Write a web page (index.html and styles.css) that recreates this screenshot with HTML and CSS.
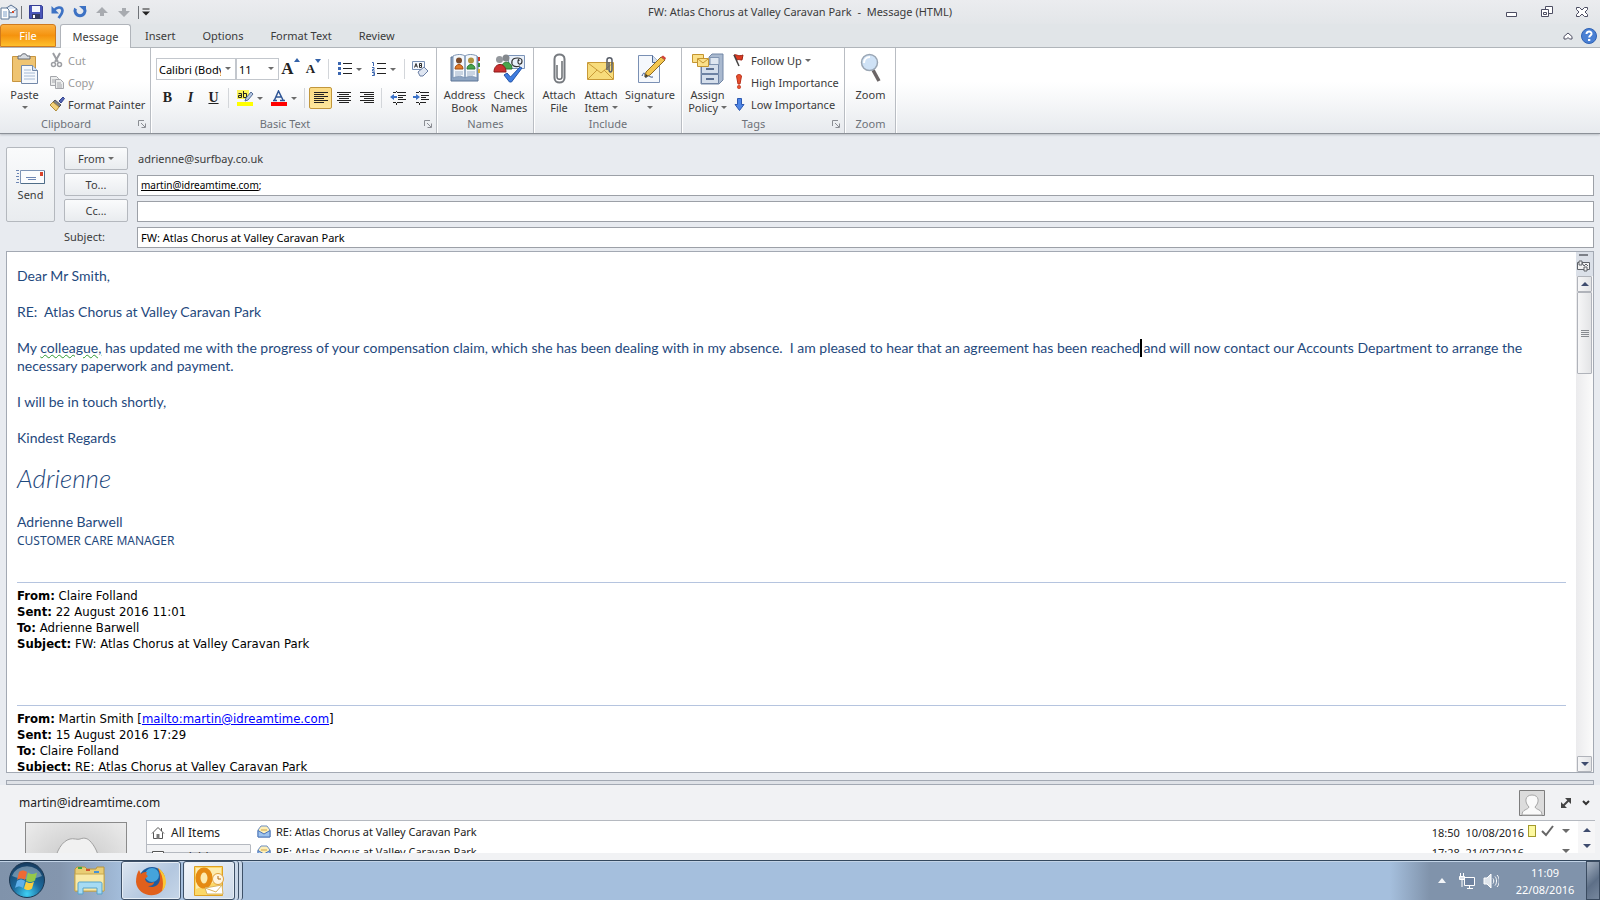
FILE: index.html
```html
<!DOCTYPE html>
<html lang="en">
<head>
    <meta charset="UTF-8">
    <meta name="viewport" content="width=device-width, initial-scale=1.0">
    <title>FW: Atlas Chorus at Valley Caravan Park - Message (HTML)</title>
    <link rel="stylesheet" href="styles.css">
</head>
<body>
    <header class="titlebar">
        <div class="quick">
            <svg class="app-icon" width="18" height="16" viewBox="0 0 18 16"><path d="M5 5l6-4 6 4v8H5z" fill="#dfe8f4" stroke="#5a7191"/><path d="M5 5l6 4 6-4" fill="#fff" stroke="#5a7191"/><path d="M12 7h2v2h-2z" fill="#d24a2c"/><path d="M1 4h6l2 2v9H1z" fill="#fff" stroke="#5f7897"/><path d="M3 8h4M3 10h4M3 12h4" stroke="#7ea0c8"/></svg>
            <span class="quick-sep"></span>
            <button class="quick-button" aria-label="Save"><svg width="16" height="16" viewBox="0 0 16 16"><path d="M1.500 1.500h12l1 1v12h-13z" fill="#4a56b8" stroke="#353f96"/><path d="M4 2h8v6H4z" fill="#f4f7fd"/><path d="M4 10h8v5H4z" fill="#353b60"/><path d="M5 11h2v3H5z" fill="#fff"/></svg></button>
            <button class="quick-button" aria-label="Undo"><svg width="16" height="16" viewBox="0 0 16 16"><path d="M4 7C6 3 12 2 12.500 6.500c0 3-2 5-4 7.500" fill="none" stroke="#3d72c4" stroke-width="2.600"/><path d="M1.500 2v7.500H9z" fill="#3d72c4"/></svg></button>
            <button class="quick-button" aria-label="Repeat"><svg width="16" height="16" viewBox="0 0 16 16"><path d="M3.500 4.500a5 5 0 1 0 9 0" fill="none" stroke="#3d72c4" stroke-width="3"/><path d="M7 2h7v6.500z" fill="#3d72c4"/></svg></button>
            <button class="quick-button" aria-label="Previous item"><svg width="14" height="12" viewBox="0 0 14 12"><path d="M7 1l6 6H9v3H5V7H1z" fill="#a8abb0"/></svg></button>
            <button class="quick-button" aria-label="Next item"><svg width="14" height="12" viewBox="0 0 14 12"><path d="M7 11l6-6H9V2H5v3H1z" fill="#a8abb0"/></svg></button>
            <span class="quick-sep"></span>
            <button class="quick-more" aria-label="Customize toolbar"><svg width="8" height="8" viewBox="0 0 8 8"><path d="M.5 1h7" stroke="#222"/><path d="M0 3.500h8L4 7.500z" fill="#222"/></svg></button>
        </div>
        <h1 class="title">FW: Atlas Chorus at Valley Caravan Park&nbsp; -&nbsp; Message (HTML)</h1>
        <div class="window-buttons">
            <button aria-label="Minimize"><svg width="12" height="12" viewBox="0 0 12 12"><path d="M.5 6.500h10v4H.5z" fill="#fff" stroke="#4d4e63"/></svg></button>
            <button aria-label="Restore"><svg width="12" height="12" viewBox="0 0 12 12"><path d="M4.500.5h7v7h-7z" fill="#fff" stroke="#4d4e63"/><path d="M.5 3.500h7v7h-7z" fill="#fff" stroke="#4d4e63"/><path d="M2.500 6.500h3v2h-3z" fill="none" stroke="#4d4e63"/></svg></button>
            <button aria-label="Close"><svg width="12" height="10" viewBox="0 0 12 10"><path d="M.5.5h3L6 3 8.500.5h3v2L9 5l2.500 2.500v2h-3L6 7 3.500 9.500h-3v-2L3 5 .5 2.500z" fill="#fff" stroke="#4d4e63"/></svg></button>
        </div>
    </header>

    <nav class="tabs">
        <button class="tab file">File</button>
        <button class="tab active">Message</button>
        <button class="tab">Insert</button>
        <button class="tab">Options</button>
        <button class="tab">Format Text</button>
        <button class="tab">Review</button>
        <div class="tab-right">
            <button aria-label="Minimize ribbon"><svg width="10" height="8" viewBox="0 0 10 8"><path d="M1 4.500L5 1l4 3.500V7H6.500L5 5.500 3.500 7H1z" fill="#fff" stroke="#4d4e63"/></svg></button>
            <button aria-label="Help"><svg width="16" height="16" viewBox="0 0 16 16"><circle cx="8" cy="8" r="7.500" fill="#4a80d4" stroke="#2f62b4"/><path d="M5.500 6c0-3.500 5.500-3 5 0-.3 1.500-2.300 1.500-2.300 3.500" fill="none" stroke="#fff" stroke-width="2"/><path d="M7 11h2.300v2H7z" fill="#fff"/></svg></button>
        </div>
    </nav>

    <section class="ribbon">
        <div class="group clipboard">
            <div class="group-body">
                <button class="large">
                    <svg width="30" height="32" viewBox="0 0 30 32"><path d="M2.500 3.500h23v25h-23z" fill="#efc472" stroke="#c79540"/><path d="M8 6V3h3c0-3 6-3 6 0h3v3z" fill="#d9dde2" stroke="#666b73"/><path d="M11.500 12.500h11l5 5v13h-16z" fill="#f6f9fd" stroke="#7288a8"/><path d="M22.500 12.500v5h5" fill="#d6e1f0" stroke="#7288a8"/><path d="M14 17h7M14 20h11M14 23h11M14 26h11" stroke="#a6bad4"/></svg>
                    <span>Paste</span><i class="arrow"></i>
                </button>
                <div class="small-list">
                    <button class="small" disabled><svg width="16" height="16" viewBox="0 0 16 16"><path d="M4 1l5 9M11 1L6 10" stroke="#9c9ea3" stroke-width="2"/><circle cx="4.500" cy="12.500" r="2" fill="none" stroke="#9c9ea3" stroke-width="1.500"/><circle cx="10.500" cy="12.500" r="2" fill="none" stroke="#9c9ea3" stroke-width="1.500"/></svg>Cut</button>
                    <button class="small" disabled><svg width="16" height="16" viewBox="0 0 16 16"><path d="M1.500 2.500h6l2 2v7h-8z" fill="#eceded" stroke="#a4a6ab"/><path d="M6.500 5.500h5l3 3v6h-8z" fill="#eceded" stroke="#a4a6ab"/><path d="M8 9h4M8 11h5M8 13h5M3 6h3M3 8h3" stroke="#a4a6ab"/></svg>Copy</button>
                    <button class="small"><svg width="16" height="16" viewBox="0 0 16 16"><path d="M10 5l4-4 1.500 1.500L12 7z" fill="#5466b4" stroke="#354590"/><path d="M6 4l6 5-2 2-6-5z" fill="#7c8088" stroke="#53565e"/><path d="M4 6l6 5-3 4-6-6z" fill="#f3d27c" stroke="#b08c38"/></svg>Format Painter</button>
                </div>
            </div>
            <div class="group-label">Clipboard<svg class="launcher" width="8" height="8" viewBox="0 0 8 8"><path d="M.5 6V.5H6M3 3l4 4M7.500 3.500v4h-4" fill="none" stroke="#8a8d93"/></svg></div>
        </div>

        <div class="group basic">
            <div class="group-body format">
                <div class="row">
                    <span class="combo face"><select aria-label="Font"><option>Calibri (Body)</option></select></span>
                    <span class="combo size"><select aria-label="Font size"><option>11</option></select></span>
                    <button class="tool" aria-label="Grow font"><b class="serif grow">A</b><svg class="top" width="6" height="12" viewBox="0 0 6 12"><path d="M0 4h6L3 0z" fill="#3462a8"/></svg></button>
                    <button class="tool" aria-label="Shrink font"><b class="serif shrink">A</b><svg class="top" width="6" height="12" viewBox="0 0 6 12"><path d="M0 1h6L3 5z" fill="#3462a8"/></svg></button>
                    <span class="sep"></span>
                    <button class="tool split" aria-label="Bullets"><svg width="15" height="14" viewBox="0 0 15 14"><path d="M0 0h3v3H0zM0 5h3v3H0zM0 10h3v3H0z" fill="#3b66b0"/><path d="M5 1.500h9M5 6.500h9M5 11.500h9" stroke="#222"/></svg><i class="arrow"></i></button>
                    <button class="tool split" aria-label="Numbering"><svg width="15" height="14" viewBox="0 0 15 14"><path d="M0 .5h1.500V4M0 5.500h2v2H.5V9H3M0 10.500h2.500v3H0M1 12h1.500" fill="none" stroke="#3b66b0"/><path d="M5 1.500h9M5 6.500h9M5 11.500h9" stroke="#222"/></svg><i class="arrow"></i></button>
                    <span class="sep"></span>
                    <button class="tool" aria-label="Clear formatting"><svg width="17" height="16" viewBox="0 0 17 16"><path d="M.5.5h12v8H.5z" fill="#f4f8fd" stroke="#7890b4"/><path d="M2.500 6.500l1.500-4 1.500 4M3 5h2M7.500 2.500v4h2v-4zM7.500 4.500h2" fill="none" stroke="#333"/><path d="M6 11l6-5 4 4-5 5H8z" fill="#dfe6f2" stroke="#6b7fa4"/></svg></button>
                </div>
                <div class="row">
                    <button class="tool serif" aria-label="Bold"><b>B</b></button>
                    <button class="tool serif" aria-label="Italic"><em>I</em></button>
                    <button class="tool serif" aria-label="Underline"><u>U</u></button>
                    <span class="sep"></span>
                    <button class="tool split" aria-label="Highlight colour"><svg width="17" height="17" viewBox="0 0 17 17"><path d="M0 0h12v9H0z" fill="#fbf35a"/><path d="M1.500 3.500h3v4h-3v-2h3M6.500 1v6.500h3v-4h-3" fill="none" stroke="#222"/><path d="M9 8l5-6 2 2-5 6-3 1z" fill="#b7c8e4" stroke="#536c94"/><path d="M0 12h16v4H0z" fill="#ff0"/></svg><i class="arrow"></i></button>
                    <button class="tool split" aria-label="Font colour"><svg width="17" height="17" viewBox="0 0 17 17"><path d="M2 10.500h4M9 10.500h5M3.500 10l4-9 4.500 9M5 7h5" fill="none" stroke="#2e5596" stroke-width="1.500"/><path d="M0 12h16v4H0z" fill="#f00"/></svg><i class="arrow"></i></button>
                    <span class="sep"></span>
                    <button class="tool pressed" aria-label="Align left"><svg width="14" height="12" viewBox="0 0 14 12"><path d="M0 .5h14M0 2.500h10M0 4.500h14M0 6.500h10M0 8.500h14M0 10.500h10" stroke="#222"/></svg></button>
                    <button class="tool" aria-label="Centre"><svg width="14" height="12" viewBox="0 0 14 12"><path d="M0 .5h14M2 2.500h10M0 4.500h14M2 6.500h10M0 8.500h14M2 10.500h10" stroke="#222"/></svg></button>
                    <button class="tool" aria-label="Align right"><svg width="14" height="12" viewBox="0 0 14 12"><path d="M0 .5h14M4 2.500h10M0 4.500h14M4 6.500h10M0 8.500h14M4 10.500h10" stroke="#222"/></svg></button>
                    <span class="sep"></span>
                    <button class="tool" aria-label="Decrease indent"><svg width="16" height="14" viewBox="0 0 16 14"><path d="M3 1.500h3M7 1.500h9M8 4.500h8M8 6.500h5M8 8.500h8M3 11.500h3M7 11.500h6M6.500 0v1M6.500 12v2" stroke="#222"/><path d="M0 6l4-3v2h3v2H4v2z" fill="#3b72c8"/></svg></button>
                    <button class="tool" aria-label="Increase indent"><svg width="16" height="14" viewBox="0 0 16 14"><path d="M3 1.500h3M7 1.500h9M8 4.500h8M8 6.500h5M8 8.500h8M3 11.500h3M7 11.500h6M6.500 0v1M6.500 12v2" stroke="#222"/><path d="M7 6L3 3v2H0v2h3v2z" fill="#3b72c8"/></svg></button>
                </div>
            </div>
            <div class="group-label">Basic Text<svg class="launcher" width="8" height="8" viewBox="0 0 8 8"><path d="M.5 6V.5H6M3 3l4 4M7.500 3.500v4h-4" fill="none" stroke="#8a8d93"/></svg></div>
        </div>

        <div class="group names">
            <div class="group-body">
                <button class="large">
                    <svg width="32" height="32" viewBox="0 0 32 32"><path d="M2 4h27v24H2z" fill="#8ea5c2" stroke="#5c7596"/><path d="M4 3c4-2 9-2 12 0v22c-3-2-8-2-12 0zM16 3c3-2 8-2 12 0v22c-4-2-9-2-12 0z" fill="#f4f8fc" stroke="#7b93b3"/><circle cx="10" cy="7.500" r="3" fill="#7a4a2a"/><path d="M6 16c0-6 8-6 8 0z" fill="#e07b28" stroke="#a34c10"/><circle cx="22" cy="7.500" r="3" fill="#b09440"/><path d="M18 16c0-6 8-6 8 0z" fill="#4aa44c" stroke="#2b7a35"/><path d="M6 19h8M6 21h8M6 23h6M18 19h8M18 21h8M18 23h6" stroke="#9db0c8"/><path d="M29 4h2v4h-2z" fill="#c43a2c"/><path d="M29 10h2v4h-2z" fill="#3e8e3e"/><path d="M29 16h2v4h-2z" fill="#d9b13a"/></svg>
                    <span>Address<br>Book</span>
                </button>
                <button class="large narrow">
                    <svg width="32" height="32" viewBox="0 0 32 32"><path d="M15.500 2.500h16v13h-16z" fill="#e9f0f9" stroke="#7c94b8"/><path d="M27 13c-6 2-9-1-8-5s10-4 10 0-4 4-4 1 1-3 1-1" fill="none" stroke="#333" stroke-width="1.200"/><circle cx="13" cy="5" r="3.500" fill="#84888d"/><path d="M8 16c0-9 11-9 11 0z" fill="#4aa44c" stroke="#27752f"/><circle cx="6.500" cy="6.500" r="3.500" fill="#94989d"/><path d="M1 19c0-10 12-10 12 0z" fill="#cc3030" stroke="#8d1818"/><path d="M11 22l3-2 3.500 4L27 14l2 1-10.500 14h-2z" fill="#3f7de0" stroke="#2555a8"/></svg>
                    <span>Check<br>Names</span>
                </button>
            </div>
            <div class="group-label">Names</div>
        </div>

        <div class="group include">
            <div class="group-body">
                <button class="large">
                    <svg width="32" height="32" viewBox="0 0 32 32"><path d="M14 12v12c0 3 5 3 5 0V8" fill="none" stroke="#6a6d72" stroke-width="1.500"/><path d="M11.500 20V6c0-6 10-6 10 0v19c0 6-10 6-10 0v-6" fill="none" stroke="#777b80" stroke-width="2"/></svg>
                    <span>Attach<br>File</span>
                </button>
                <button class="large">
                    <svg width="32" height="32" viewBox="0 0 32 32"><path d="M2.500 9.500h26v17h-26z" fill="#f7dc7c" stroke="#c89a38"/><path d="M3 26l9-9M28 26l-9-9M3 10l13 10 12-10" fill="none" stroke="#c89a38"/><path d="M22 17V7c0-3 5-3 5 0v9c0 4-3 4-3 0V9" fill="none" stroke="#555b66" stroke-width="1.500"/></svg>
                    <span>Attach<br>Item <i class="arrow"></i></span>
                </button>
                <button class="large wide">
                    <svg width="32" height="32" viewBox="0 0 32 32"><path d="M4.500 2.500h14l7 7v20h-21z" fill="#f5f8fc" stroke="#7a90b4"/><path d="M18.500 2.500v7h7" fill="#d5e0ef" stroke="#4f6a96"/><path d="M8 23c2-5 3-3 3 0s2 1 3 0 2 2 5 1" fill="none" stroke="#34558e"/><path d="M12 19L27 4l4 3-15 15-5 2z" fill="#f3c650" stroke="#8d6a22"/><path d="M27 4l2-1.500 3 2.500-1 2z" fill="#d2433a"/><path d="M11 24l1-3 2 2z" fill="#333"/></svg>
                    <span>Signature</span><i class="arrow"></i>
                </button>
            </div>
            <div class="group-label">Include</div>
        </div>

        <div class="group tags">
            <div class="group-body">
                <button class="large">
                    <svg width="32" height="32" viewBox="0 0 32 32"><path d="M17 4l3-3h11v26l-4 4H9V11h8z" fill="#a9b9cf" stroke="#7287a6"/><path d="M9.500 11.500h17v9h-17zM9.500 21.500h17v9h-17z" fill="#d4deeb" stroke="#6d82a3"/><path d="M18 4.500h9v7h-9z" fill="#dfe7f1" stroke="#8296b3"/><path d="M14 16h8M14 26h8" stroke="#5b7092" stroke-width="2"/><path d="M.5 1.500h11v8H.5z" fill="#fbe08a" stroke="#c49530"/><path d="M5.500 5.500h11v8h-11z" fill="#fbe08a" stroke="#c49530"/><path d="M6 6l5 4 5-4" fill="none" stroke="#c49530"/></svg>
                    <span>Assign<br>Policy <i class="arrow"></i></span>
                </button>
                <div class="small-list">
                    <button class="small"><svg width="16" height="16" viewBox="0 0 16 16"><path d="M2 3c3-1 4 2 9 0l-1 5c-3 0-3-1-5 0z" fill="#dd3a22" stroke="#9c2413"/><path d="M2 3l5 11" stroke="#444" stroke-width="1.500"/></svg>Follow Up <i class="arrow"></i></button>
                    <button class="small"><svg width="16" height="16" viewBox="0 0 16 16"><path d="M4.500 2c1-2 4-2 5 0L8 10H6z" fill="#e8502e" stroke="#b8301a"/><circle cx="7" cy="13" r="1.700" fill="#e8502e" stroke="#b8301a" stroke-width=".6"/></svg>High Importance</button>
                    <button class="small"><svg width="16" height="16" viewBox="0 0 16 16"><path d="M5.500 2.500h4v6H12l-4.500 6L3 8.500h2.500z" fill="#4f86e6" stroke="#2d58b0"/></svg>Low Importance</button>
                </div>
            </div>
            <div class="group-label">Tags<svg class="launcher" width="8" height="8" viewBox="0 0 8 8"><path d="M.5 6V.5H6M3 3l4 4M7.500 3.500v4h-4" fill="none" stroke="#8a8d93"/></svg></div>
        </div>

        <div class="group zoom">
            <div class="group-body">
                <button class="large">
                    <svg width="32" height="32" viewBox="0 0 32 32"><path d="M18 17l6 11" stroke="#6b6566" stroke-width="3.500"/><circle cx="14.500" cy="9.500" r="8" fill="#cfe2f6" stroke="#9aa6b4" stroke-width="1.500"/><path d="M9 10c0-4 3-6 6-6" fill="none" stroke="#fff" stroke-width="2"/></svg>
                    <span>Zoom</span>
                </button>
            </div>
            <div class="group-label">Zoom</div>
        </div>
    </section>

    <form class="envelope">
        <button type="button" class="send"><svg width="30" height="16" viewBox="0 0 30 16"><path d="M0 1.500h3M1 4.500h2M0 7.500h3M1 10.500h2M0 13.500h3" stroke="#6d86b4"/><path d="M4.500 1.500h24v13h-24z" fill="#fbfcfe" stroke="#7d94b6"/><path d="M28.500 2v12.500H5" fill="none" stroke="#4f6d88"/><path d="M24 3h3v4h-3z" fill="#d9442c"/><path d="M10 8.500h10M12 10.500h8" stroke="#6d86b4"/></svg>Send</button>
        <div class="fields">
            <button type="button" class="field-button">From <i class="arrow"></i></button>
            <span class="from">adrienne@surfbay.co.uk</span>
            <button type="button" class="field-button">To...</button>
            <div class="box"><span class="recipient"><u>martin@idreamtime.com</u>;</span><input type="text" aria-label="To"></div>
            <button type="button" class="field-button">Cc...</button>
            <div class="box"><input type="text" aria-label="Cc"></div>
            <label for="subject">Subject:</label>
            <div class="box"><input type="text" id="subject" value="FW: Atlas Chorus at Valley Caravan Park"></div>
        </div>
    </form>

    <main class="editor">
        <article class="letter">
            <p>Dear Mr Smith,</p>
            <p>RE:&nbsp; Atlas Chorus at Valley Caravan Park</p>
            <p>My <span class="grammar">colleague,</span> has updated me with the progress of your compensation claim, which she has been dealing with in my absence.&nbsp; I am pleased to hear that an agreement has been reached<span class="caret"></span> and will now contact our Accounts Department to arrange the necessary paperwork and payment.</p>
            <p>I will be in touch shortly,</p>
            <p>Kindest Regards</p>
            <p class="signature">Adrienne</p>
            <p class="job">Adrienne Barwell<br><span class="role">CUSTOMER CARE MANAGER</span></p>
            <div class="quoted">
                <b>From:</b> Claire Folland<br>
                <b>Sent:</b> 22 August 2016 11:01<br>
                <b>To:</b> Adrienne Barwell<br>
                <b>Subject:</b> FW: Atlas Chorus at Valley Caravan Park
            </div>
            <div class="quoted">
                <b>From:</b> Martin Smith [<a href="mailto:martin@idreamtime.com">mailto:martin@idreamtime.com</a>]<br>
                <b>Sent:</b> 15 August 2016 17:29<br>
                <b>To:</b> Claire Folland<br>
                <b>Subject:</b> RE: Atlas Chorus at Valley Caravan Park
            </div>
        </article>
        <div class="scrollbar">
            <div class="scroll-tools"><svg width="13" height="20" viewBox="0 0 13 20"><path d="M2 0h9v2H2z" fill="#7c8088"/><path d="M.5 8.500h12v7H.5z" fill="#f2f2f2" stroke="#5e6268"/><path d="M2 7h3v4H2zM7 13h3v4H7zM5 9l2 3 2-2 2 2" fill="#f2f2f2" stroke="#5e6268"/></svg></div>
            <button class="scroll-button" aria-label="Scroll up"><i class="up"></i></button>
            <div class="thumb"><i class="grip"></i></div>
            <button class="scroll-button last" aria-label="Scroll down"><i class="down"></i></button>
        </div>
    </main>

    <div class="splitter"></div>

    <section class="people">
        <div class="people-head">
            <span>martin@idreamtime.com</span>
            <svg class="avatar" width="26" height="26" viewBox="0 0 26 26"><path d="M.5.5h25v25H.5z" fill="#dcdcdc" stroke="#7d7d7d"/><path d="M3 25c0-6 6-5 7-8-5-5-4-12 3-12s8 7 3 12c1 3 7 2 7 8z" fill="#fafafa" stroke="#a6a6a6"/></svg>
            <svg class="expand" width="12" height="12" viewBox="0 0 12 12"><path d="M2 10l8-8" stroke="#444" stroke-width="2"/><path d="M5 1h6v6zM1 5v6h6z" fill="#444"/></svg>
            <svg class="collapse" width="8" height="6" viewBox="0 0 8 6"><path d="M1 1l3 3 3-3" fill="none" stroke="#333" stroke-width="2"/></svg>
        </div>
        <div class="people-body">
            <div class="photo"><svg width="94" height="70" viewBox="0 0 94 70"><path d="M26 40c2-14 8-24 16-26 3-1 8 1 10 0 5-2 8 0 10 2 4 4 9 12 10 24v30H26z" fill="#f1f1f1" stroke="#a0a0a0"/></svg></div>
            <ul class="filters">
                <li class="selected"><svg width="14" height="14" viewBox="0 0 14 14"><path d="M1 7.500L7 1.500l6 6M2.500 6.500v6h9v-6M10.500 2v3" fill="none" stroke="#555"/><path d="M5.500 8h3v5h-3z" fill="#777"/></svg>All Items</li>
                <li><svg width="14" height="14" viewBox="0 0 14 14"><path d="M1.500 1.500h11v11h-11z" fill="#fff" stroke="#555"/></svg>Activities</li>
            </ul>
            <ul class="mails">
                <li><svg width="14" height="13" viewBox="0 0 14 13"><path d="M1 5l3-4h6l3 4v7H1z" fill="#fdeeb8" stroke="#6f8fc0"/><path d="M1 5.500L7 9l6-3.500V12H1z" fill="#9ec3ee" stroke="#4a74b8"/><path d="M4 5h6" stroke="#cfa544"/></svg><span>RE: Atlas Chorus at Valley Caravan Park</span><time>18:50&nbsp; 10/08/2016</time><i class="note"></i><svg width="13" height="12" viewBox="0 0 13 12"><path d="M1 6l4 4 7-9" fill="none" stroke="#666" stroke-width="2"/></svg><i class="arrow"></i></li>
                <li><svg width="14" height="13" viewBox="0 0 14 13"><path d="M1 5l3-4h6l3 4v7H1z" fill="#fdeeb8" stroke="#6f8fc0"/><path d="M1 5.500L7 9l6-3.500V12H1z" fill="#9ec3ee" stroke="#4a74b8"/><path d="M4 5h6" stroke="#cfa544"/></svg><span>RE: Atlas Chorus at Valley Caravan Park</span><time>17:28&nbsp; 21/07/2016</time><i class="note blank"></i><svg width="13" height="12" viewBox="0 0 13 12"></svg><i class="arrow"></i></li>
            </ul>
            <div class="mini-scroll"><i class="up"></i><i class="down"></i></div>
        </div>
    </section>

    <footer class="taskbar">
        <button class="start" aria-label="Start"><svg width="38" height="38" viewBox="0 0 38 38"><defs><radialGradient id="orb" cx=".5" cy=".9" r=".9"><stop offset="0" stop-color="#3fd0f4"/><stop offset=".45" stop-color="#1c6a9c"/><stop offset="1" stop-color="#173a5e"/></radialGradient></defs><circle cx="19" cy="19" r="17.500" fill="url(#orb)" stroke="#1b3650"/><path d="M4 15a15.500 13 0 0 1 30 0c-9 4-21 4-30 0z" fill="#fff" opacity=".35"/><path d="M11 11c3-2 5-2 8 0l-2 8c-3-2-5-2-8 0z" fill="#ee6a34"/><path d="M20 11.500c3 2 5 2 9 0l-2 8c-4 2-6 2-9 0z" fill="#95c84a"/><path d="M9 20c3-2 5-2 8 0l-2 7c-3-2-5-2-8 0z" fill="#5fb0ea"/><path d="M18 20.500c3 2 5 2 8 0l-2 7c-3 2-5 2-8 0z" fill="#fbce3e"/></svg></button>
        <button class="task plain" aria-label="Explorer"><svg width="34" height="32" viewBox="0 0 34 32"><path d="M2 4l2-2h8l2 2h9l1-2h7v24H2z" fill="#e9cd74" stroke="#b8963e"/><path d="M2 9h29v17H2z" fill="#f9e9a6" stroke="#c8a850"/><path d="M5 2h4v2H5z" fill="#3fa83f"/><path d="M13 4h4v2h-4z" fill="#d2552c"/><path d="M21 6h5v2h-5z" fill="#4793d4"/><path d="M5 29V19c0-2 1-2 2-2h20c2 0 2 1 2 2v10h-5v-6H10v6z" fill="#a6dbf3" stroke="#58a3c9"/></svg></button>
        <button class="task" aria-label="Firefox"><svg width="32" height="32" viewBox="0 0 32 32"><circle cx="17" cy="15" r="13" fill="#1e5c9e"/><circle cx="17" cy="10" r="7" fill="#45a4dc"/><path d="M23 3c8 5 10 18 3 24-9 7-24 2-25-10 0-5 1-9 3-12l2 4c2-2 4-2 6-2-1 2-1 3 1 4l-3 3c1 4 5 5 9 3 0 3-3 4-6 4 6 3 12-1 12-8 0-4-1-7-2-10z" fill="#e0601c"/><path d="M23 3c8 5 11 16 4 23 2-8 1-16-4-23z" fill="#fbc834"/></svg></button>
        <button class="task open" aria-label="Outlook"><svg width="32" height="32" viewBox="0 0 32 32"><path d="M1.500 1.500h28v29h-28z" fill="#fbd868" stroke="#dfa021"/><path d="M3 3h25v12L3 24z" fill="#fdebae"/><ellipse cx="11" cy="13" rx="6" ry="8" fill="none" stroke="#e58a12" stroke-width="5"/><path d="M12 23l17-3 1 9H14z" fill="#fff" stroke="#d8b463"/><path d="M12 23l11 4 6-7" fill="none" stroke="#d8b463"/><circle cx="25" cy="14" r="5.500" fill="#fff5df" stroke="#e0a03a"/><path d="M25 11v3h3" fill="none" stroke="#b06a12"/></svg></button>
        <span class="stack"></span><span class="stack"></span>
        <div class="tray">
            <svg width="8" height="5" viewBox="0 0 8 5"><path d="M4 0l4 5H0z" fill="#f2f5f8"/></svg>
            <svg width="17" height="16" viewBox="0 0 17 16"><path d="M5.500 4.500h10v8h-10z" fill="#6f83a0" stroke="#fff"/><path d="M8 15.500h6M10.500 13v2" stroke="#fff"/><path d="M1.500 0v3M4.500 0v3M.5 3.500h5v3h-5zM3 7v7" fill="#dde3ea" stroke="#fff"/></svg>
            <svg width="16" height="16" viewBox="0 0 16 16"><path d="M1 5h3l4-4v14l-4-4H1z" fill="#dfe5ec" stroke="#fff"/><path d="M10 5.500c1 1 1 4 0 5M12 3.500c2 2 2 7 0 9M14 2c3 3 3 9 0 12" fill="none" stroke="#fff"/></svg>
            <div class="clock">11:09<br>22/08/2016</div>
            <button class="desktop" aria-label="Show desktop"></button>
        </div>
    </footer>
</body>
</html>
```

FILE: styles.css
```css
* {
    box-sizing: border-box;
}
body {
    margin: 0;
    height: 100vh;
    display: flex;
    flex-direction: column;
    overflow: hidden;
    background: #e8ebf0;
    color: #3b3b3b;
    font: 11px/13px "Noto Sans", "Open Sans", sans-serif;
}
button {
    border: 0;
    padding: 0;
    background: none;
    color: inherit;
    font: inherit;
}
svg {
    flex: none;
    display: block;
}
ul {
    list-style: none;
    margin: 0;
    padding: 0;
}
.arrow {
    display: inline-block;
    flex: none;
    border: 3px solid transparent;
    border-top-color: #6b6b6b;
    border-bottom: 0;
    vertical-align: 3px;
}

/* title bar */
.titlebar {
    height: 24px;
    flex: none;
    display: grid;
    grid-template-columns: 1fr auto 1fr;
    align-items: center;
    background: linear-gradient(#ebecef, #e3e6e9);
}
.quick {
    display: flex;
    align-items: center;
}
.quick-sep {
    width: 1px;
    height: 13px;
    margin: 0 3px;
    background: #6f7378;
}
.quick-button {
    width: 22px;
    display: flex;
    justify-content: center;
}
.title {
    margin: 0;
    font-size: 11px;
    font-weight: normal;
    line-height: 16px;
}
.window-buttons {
    display: flex;
    justify-content: flex-end;
    gap: 23px;
    padding-right: 12px;
}

/* tabs */
.tabs {
    height: 24px;
    flex: none;
    display: flex;
    background: #e1e5e8;
    border-bottom: 1px solid #b0b4ba;
}
.tab {
    padding: 0 13px;
    margin-right: 1px;
}
.tab.file {
    width: 56px;
    margin-right: 4px;
    border: 1px solid #cf7a1e;
    border-radius: 3px 3px 0 0;
    background: linear-gradient(#fbb040, #f5930e 50%, #fdbf2d);
    color: #fff;
}
.tab.active {
    width: 71px;
    padding: 0;
    margin-bottom: -1px;
    border: 1px solid #b0b4ba;
    border-bottom: 0;
    border-radius: 3px 3px 0 0;
    background: #fff;
}
.tab-right {
    margin-left: auto;
    padding-right: 3px;
    display: flex;
    align-items: center;
    gap: 8px;
}

/* ribbon */
.ribbon {
    height: 86px;
    flex: none;
    display: flex;
    background: linear-gradient(#fff 40%, #e7eaee);
    border-bottom: 1px solid #8b9097;
    box-shadow: 0 1px 2px #b9bdc4;
}
.group {
    display: flex;
    flex-direction: column;
    border-right: 1px solid #b9bdc3;
    box-shadow: 1px 0 #fff;
    margin-right: 1px;
}
.group-body {
    flex: 1;
    display: flex;
}
.group-label {
    height: 16px;
    position: relative;
    text-align: center;
    color: #6d7178;
}
.launcher {
    position: absolute;
    right: 4px;
    top: 3px;
}
.clipboard {
    width: 151px;
}
.clipboard .group-label,
.basic .group-label {
    padding-right: 18px;
}
.basic {
    width: 285px;
}
.names {
    width: 96px;
}
.include {
    width: 147px;
}
.tags {
    width: 162px;
}
.tags .group-label {
    padding-right: 20px;
}
.zoom {
    width: 50px;
}
.large {
    width: 42px;
    padding-top: 5px;
    display: flex;
    flex-direction: column;
    align-items: center;
}
.large span {
    margin-top: 3px;
}
.large > .arrow {
    margin-top: 5px;
}
.clipboard .large,
.tags .large,
.zoom .large {
    width: 49px;
}
.names .large {
    width: 53px;
}
.names .large.narrow {
    width: 36px;
}
.include .group-body {
    padding-left: 3px;
}
.large.wide {
    width: 56px;
}
.small-list {
    padding-top: 1px;
}
.small {
    height: 22px;
    display: flex;
    align-items: center;
    gap: 3px;
    white-space: nowrap;
}
.small:disabled {
    color: #9a9a9a;
}
.format {
    flex-direction: column;
    gap: 5px;
    padding: 9px 0 0 4px;
}
.row {
    height: 24px;
    display: flex;
    align-items: center;
}
.combo {
    position: relative;
    height: 22px;
    border: 1px solid #c3c7cd;
    background: #fff;
}
.combo::after {
    content: "";
    position: absolute;
    right: 4px;
    top: 8px;
    border: 3px solid transparent;
    border-top-color: #6b6b6b;
    border-bottom: 0;
}
.combo select {
    appearance: none;
    width: 100%;
    height: 20px;
    border: 0;
    padding: 0 14px 0 2px;
    background: none;
    color: #000;
    font: inherit;
}
.face {
    width: 80px;
}
.size {
    width: 43px;
}
.tool {
    width: 23px;
    height: 22px;
    display: flex;
    align-items: center;
    justify-content: center;
}
.tool.split {
    width: 34px;
    gap: 3px;
}
.tool.pressed {
    border: 1px solid #c2973c;
    border-radius: 2px;
    background: linear-gradient(#fbdb84, #fde79c);
}
.serif {
    color: #222;
    font: bold 14px/16px "Liberation Serif", serif;
}
.serif.grow {
    font-size: 17px;
}
.serif.shrink {
    font-size: 13px;
}
.top {
    align-self: flex-start;
}
.sep {
    width: 1px;
    height: 20px;
    margin: 0 4px 0 3px;
    background: #d3d6da;
}

/* address lines */
.envelope {
    flex: none;
    display: flex;
    gap: 9px;
    padding: 13px 6px 3px 6px;
}
.send,
.field-button {
    border: 1px solid #b4b8be;
    border-radius: 2px;
    background: linear-gradient(#fafbfc, #e9ecef);
}
.send {
    width: 49px;
    height: 75px;
    display: flex;
    flex-direction: column;
    align-items: center;
    justify-content: center;
    gap: 3px;
}
.fields {
    flex: 1;
    display: grid;
    grid-template-columns: 64px 1fr;
    grid-auto-rows: 23px;
    gap: 3px 9px;
    align-items: center;
}
.field-button {
    height: 23px;
}
.from {
    padding-left: 1px;
}
.box {
    height: 21px;
    margin-top: 2px;
    display: flex;
    align-items: center;
    padding: 0 3px;
    border: 1px solid #9ca0a7;
    background: #fff;
    color: #000;
}
.box input {
    flex: 1;
    min-width: 0;
    height: 19px;
    border: 0;
    padding: 0;
    outline: none;
    background: none;
    font: inherit;
}
.recipient {
    font-size: 10px;
}

/* message */
.editor {
    flex: 1;
    min-height: 0;
    margin: 0 6px;
    display: flex;
    border: 1px solid #a3a9b3;
    background: #fff;
}
.letter {
    flex: 1;
    overflow: hidden;
    padding: 15px 10px 0 10px;
    color: #1f497d;
    font: 14px/18px Lato, "Open Sans", sans-serif;
}
.letter p {
    margin: 0 0 18px;
}
.grammar {
    text-decoration: underline wavy #2f9a2f 1px;
}
.caret {
    display: inline-block;
    width: 2px;
    height: 18px;
    margin-right: -2px;
    background: #000;
    vertical-align: top;
}
.letter .signature {
    margin-bottom: 22px;
    font-size: 26px;
    font-style: italic;
    font-weight: 300;
    line-height: 26px;
}
.letter .job {
    margin-bottom: 32px;
}
.role {
    font-family: "Noto Sans", sans-serif;
    font-size: 12px;
}
.quoted {
    height: 123px;
    padding-top: 5px;
    border-top: 1px solid #b5c4df;
    color: #000;
    font: 13px/16px "DejaVu Sans Condensed", "DejaVu Sans", sans-serif;
}
.quoted a {
    color: #00f;
}
.scrollbar {
    width: 17px;
    display: flex;
    flex-direction: column;
    background: linear-gradient(90deg, #ebebed, #fbfbfb);
}
.scroll-tools {
    height: 24px;
    padding: 2px 0 0 1px;
    background: #dbe0e8;
}
.scroll-button,
.thumb {
    display: flex;
    align-items: center;
    justify-content: center;
    margin: 0 1px;
    border: 1px solid #b0b3ba;
    border-radius: 1px;
    background: linear-gradient(90deg, #f6f6f7, #e3e4e6);
}
.scroll-button {
    height: 16px;
}
.scroll-button.last {
    margin-top: auto;
}
.thumb {
    height: 82px;
}
.grip {
    width: 8px;
    height: 7px;
    background: repeating-linear-gradient(#888b90 0 1px, transparent 1px 2px);
}
.up,
.down {
    border: 4px solid transparent;
    border-top-width: 0;
    border-bottom-color: #3f4c6e;
}
.down {
    border-top: 4px solid #3f4c6e;
    border-bottom-width: 0;
}
.splitter {
    flex: none;
    height: 5px;
    margin: 7px 6px 0;
    border: 1px solid #a3a9b3;
    background: #dfe2e7;
}

/* people pane */
.people {
    flex: none;
    height: 75px;
    padding: 0 5px 7px 19px;
    overflow: hidden;
    display: flex;
    flex-direction: column;
    background: #f1f2f4;
}
.people-head {
    height: 35px;
    flex: none;
    display: flex;
    align-items: center;
    color: #222;
    font-size: 12px;
}
.avatar {
    margin-left: auto;
}
.expand {
    margin: 0 10px 0 15px;
}
.collapse {
    margin-right: 5px;
}
.people-body {
    flex: 1;
    min-height: 0;
    display: flex;
    overflow: hidden;
}
.photo {
    width: 102px;
    height: 90px;
    margin: 2px 19px 0 6px;
    padding: 2px;
    border: 1px solid #8a8a8a;
    background: radial-gradient(#c4c4c4, #ececec);
}
.filters {
    width: 105px;
    border: 1px solid #b5b9c0;
    border-right: 0;
    background: #f1f2f4;
    color: #222;
    font-size: 12px;
}
.filters li {
    height: 24px;
    display: flex;
    align-items: center;
    gap: 6px;
    padding-left: 4px;
    border-right: 1px solid #b5b9c0;
}
.filters .selected {
    border-right-color: #fff;
    border-bottom: 1px solid #b5b9c0;
    background: #fff;
}
.mails {
    flex: 1;
    padding-left: 6px;
    border-top: 1px solid #b5b9c0;
    background: #fff;
    color: #222;
}
.mails li {
    height: 20px;
    display: flex;
    align-items: center;
    gap: 5px;
    padding-right: 8px;
}
.mails time {
    margin-left: auto;
    padding-top: 3px;
}
.mails .arrow {
    margin-left: 3px;
    border-width: 4px 4px 0;
}
.note {
    width: 8px;
    height: 12px;
    margin-left: -1px;
    border: 1px solid #a39a2c;
    background: #fdf9a0;
}
.note.blank {
    visibility: hidden;
}
.mini-scroll {
    width: 17px;
    padding-top: 7px;
    display: flex;
    flex-direction: column;
    align-items: center;
    gap: 12px;
    border-top: 1px solid #b5b9c0;
    background: #f6f6f7;
}

/* taskbar */
.taskbar {
    flex: none;
    height: 40px;
    display: flex;
    align-items: stretch;
    border-top: 1px solid #34485e;
    background: linear-gradient(90deg, #8093ab, #8496ae 60px, #a5bfdd 125px, #a5bfdd calc(100% - 210px), #8093ab calc(100% - 170px));
    box-shadow: inset 0 1px #c2d3e6;
}
.start {
    width: 54px;
    display: flex;
    justify-content: center;
}
.task {
    width: 60px;
    display: flex;
    align-items: center;
    justify-content: center;
    border: 1px solid #3e5168;
    border-radius: 3px;
    background: linear-gradient(135deg, #dbe5f0, #b3c7df 60%, #c6d6e8);
    box-shadow: inset 0 0 0 1px #e6eef6;
}
.task.plain {
    width: 67px;
    padding-left: 4px;
    border-color: transparent;
    background: none;
    box-shadow: none;
}
.task.open {
    width: 52px;
    margin-left: 2px;
    background: linear-gradient(135deg, #f4f7fa, #cddaea);
}
.stack {
    width: 4px;
    border-right: 1px solid #3e5168;
    border-radius: 0 3px 3px 0;
    background: #c9d7e8;
}
.tray {
    margin-left: auto;
    display: flex;
    align-items: center;
    gap: 13px;
    color: #fff;
}
.tray svg + svg + svg {
    margin-left: -6px;
}
.clock {
    width: 66px;
    text-align: center;
    line-height: 17px;
}
.desktop {
    width: 14px;
    align-self: stretch;
    margin-left: -5px;
    border: 1px solid #3a4b60;
    background: linear-gradient(135deg, #a3b0c0, #5d6f87 55%, #77889e);
}
```
